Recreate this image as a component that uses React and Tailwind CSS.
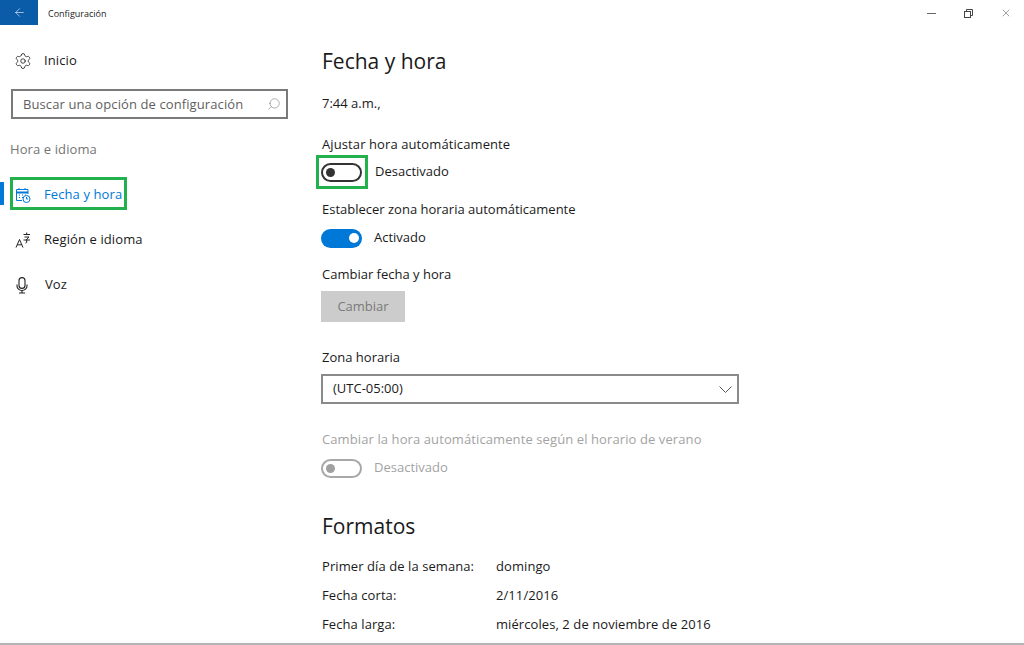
import React from "react";
import { ArrowLeft, Search, Settings, X } from "lucide-react";

const font = "font-['Open_Sans',sans-serif]";

const Toggle = ({ on, disabled }) => {
    if (on) {
        return (
            <div className="w-[41px] h-[19px] rounded-full bg-[#0078d7] flex items-center justify-end pr-[3px]">
                <div className="w-[10px] h-[10px] rounded-full bg-white" />
            </div>
        );
    }
    return (
        <div className={`w-[41px] h-[19px] rounded-full border-2 flex items-center pl-[3px] ${disabled ? "border-[#a8a8a8]" : "border-[#333333]"}`}>
            <div className={`w-[9px] h-[9px] rounded-full ${disabled ? "bg-[#a0a0a0]" : "bg-[#333333]"}`} />
        </div>
    );
};

const CalendarIcon = () => (
    <svg width="16" height="17" viewBox="0 0 16 17" fill="none" stroke="#0078d7" strokeWidth="1">
        <path d="M7 13.5H1.5V2.5H13V7" />
        <path d="M1.5 5.5H13" strokeWidth="2" />
        <path d="M4 1v2M10 1v2" />
        <path d="M4 8h1M7 8h1M10 8h1M4 10.500h1M7 10.500h1" />
        <circle cx="11.500" cy="12" r="3.500" />
        <path d="M11.500 10v2h1.500" />
    </svg>
);

const LangIcon = () => (
    <svg width="16" height="16" viewBox="0 0 16 16" fill="none" stroke="#222222" strokeWidth="1">
        <path d="M1 15.500l3.500-8 3.500 8M2.300 12.800h4.400" />
        <path d="M8.500 2.500h6.500M11.700 .5v2M9.500 5h4.500L12 7M8.500 8h6.500M11.700 7v3.500l-1.200 .5" />
    </svg>
);

const MicIcon = () => (
    <svg width="14" height="17" viewBox="0 0 14 17" fill="none" stroke="#222222" strokeWidth="1.100">
        <rect x="4" y="0.600" width="6" height="10.800" rx="3" />
        <path d="M2 7.500v1.500a5 4.500 0 0 0 10 0V7.500" />
        <path d="M7 13.500v2.500M4 16h6" />
    </svg>
);

const RestoreIcon = () => (
    <svg width="9" height="9" viewBox="0 0 9 9" fill="none" stroke="#444444" strokeWidth="1">
        <rect x="0.500" y="2.500" width="6" height="6" />
        <path d="M2.500 2.500V0.500H8.500V6.500H6.500" />
    </svg>
);

const NavItem = ({ icon, children, active }) => (
    <div className="relative h-[45px] flex items-center pl-[15px]">
        {active && <div className="absolute left-0 top-[9px] w-1 h-[23px] bg-[#0078d7]" />}
        <div className="w-[29px] flex items-center">{icon}</div>
        <span className={`text-[13px] ${active ? "text-[#0078d7]" : "text-[#1a1a1a]"}`}>{children}</span>
        {active && <div className="absolute left-[10px] top-[4px] w-[117px] h-[33px] border-[3px] border-[#22b14c]" />}
    </div>
);

const Format = ({ label, value }) => (
    <div className="h-[29px] pl-px flex items-center text-[13px] text-[#1a1a1a] tracking-[0.08px]">
        <span className="w-[174px]">{label}</span>
        <span>{value}</span>
    </div>
);

export default function App() {
    return (
        <div className={`w-[1024px] h-[645px] bg-white overflow-hidden flex flex-col ${font}`}>
            <div className="h-[26px] shrink-0 flex items-center">
                <div className="w-[38px] h-[25px] self-start bg-[#0a5ca8] flex items-center justify-center">
                    <ArrowLeft size={13} color="#ffffff" strokeWidth={1.1} />
                </div>
                <span className="ml-[10px] mt-px text-[9px] text-[#222222]">Configuración</span>
                <div className="ml-auto flex items-center">
                    <div className="w-[37px] flex justify-center"><div className="w-[9px] h-px bg-[#666666]" /></div>
                    <div className="w-[37px] flex justify-center"><RestoreIcon /></div>
                    <div className="w-[37px] flex justify-center"><X size={12} color="#444444" strokeWidth={1} /></div>
                </div>
            </div>
            <div className="flex-1 flex min-h-0 border-b-2 border-[#b4b4b4]">
                <div className="w-[321px] shrink-0 tracking-[0.1px]">
                    <div className="h-[45px] mt-[12px] flex items-center pl-[15px]">
                        <div className="w-[29px]"><Settings size={18} color="#222222" strokeWidth={1.1} className="-ml-px" /></div>
                        <span className="text-[13px] text-[#1a1a1a]">Inicio</span>
                    </div>
                    <div className="ml-[11px] w-[277px] h-[30px] mt-[6px] border-2 border-[#7a7a7a] flex items-center justify-between pl-[10px] pr-[5px]">
                        <span className="mt-px text-[13px] text-[#5f5f5f]">Buscar una opción de configuración</span>
                        <Search size={14} color="#777777" strokeWidth={1} className="-scale-x-100" />
                    </div>
                    <div className="ml-[10px] mt-[21px] text-[13px] text-[#757575]">Hora e idioma</div>
                    <div className="mt-[13px]">
                        <NavItem icon={<CalendarIcon />} active>Fecha y hora</NavItem>
                        <NavItem icon={<LangIcon />}>Región e idioma</NavItem>
                        <NavItem icon={<MicIcon />}><span className="ml-px">Voz</span></NavItem>
                    </div>
                </div>
                <div className="flex-1 text-[13px] text-[#1a1a1a]">
                    <h1 className="mt-[20px] h-[32px] pl-px flex items-center text-[21px] text-[#1a1a1a]">Fecha y hora</h1>
                    <p className="mt-[16px] h-[20px] pl-px flex items-center">7:44 a.m.,</p>
                    <p className="mt-[21px] h-[20px] pl-px flex items-center tracking-[0.1px]">Ajustar hora automáticamente</p>
                    <div className="relative mt-[7px] h-[20px] flex items-center gap-[13px]">
                        <div className="absolute left-[-5px] top-[-7px] w-[52px] h-[34px] border-[3px] border-[#22b14c]" />
                        <Toggle />
                        <span>Desactivado</span>
                    </div>
                    <p className="mt-[18px] h-[20px] pl-px flex items-center">Establecer zona horaria automáticamente</p>
                    <div className="mt-[8px] h-[20px] flex items-center gap-[12px]">
                        <Toggle on />
                        <span>Activado</span>
                    </div>
                    <p className="mt-[17px] h-[20px] pl-px flex items-center">Cambiar fecha y hora</p>
                    <div className="mt-[6px] w-[84px] h-[31px] bg-[#cccccc] text-[#7a7a7a] flex items-center justify-center">Cambiar</div>
                    <p className="mt-[26px] h-[20px] pl-px flex items-center">Zona horaria</p>
                    <div className="mt-[6px] w-[418px] h-[30px] border-2 border-[#8a8a8a] flex items-center justify-between pl-[10px] pr-[5px]">
                        <span>(UTC-05:00)</span>
                        <svg width="13" height="7" viewBox="0 0 13 7" fill="none" stroke="#555555" strokeWidth="1">
                            <path d="M.5 .5l6 6 6-6" />
                        </svg>
                    </div>
                    <p className="mt-[26px] h-[20px] pl-px flex items-center text-[#a3a3a3] tracking-[0.1px]">Cambiar la hora automáticamente según el horario de verano</p>
                    <div className="mt-[8px] h-[20px] flex items-center gap-[12px] text-[#a3a3a3]">
                        <Toggle disabled />
                        <span>Desactivado</span>
                    </div>
                    <h2 className="mt-[33px] h-[32px] pl-px flex items-center text-[21px]">Formatos</h2>
                    <div className="mt-[9px]">
                        <Format label="Primer día de la semana:" value="domingo" />
                        <Format label="Fecha corta:" value="2/11/2016" />
                        <Format label="Fecha larga:" value="miércoles, 2 de noviembre de 2016" />
                    </div>
                </div>
            </div>
        </div>
    );
}
